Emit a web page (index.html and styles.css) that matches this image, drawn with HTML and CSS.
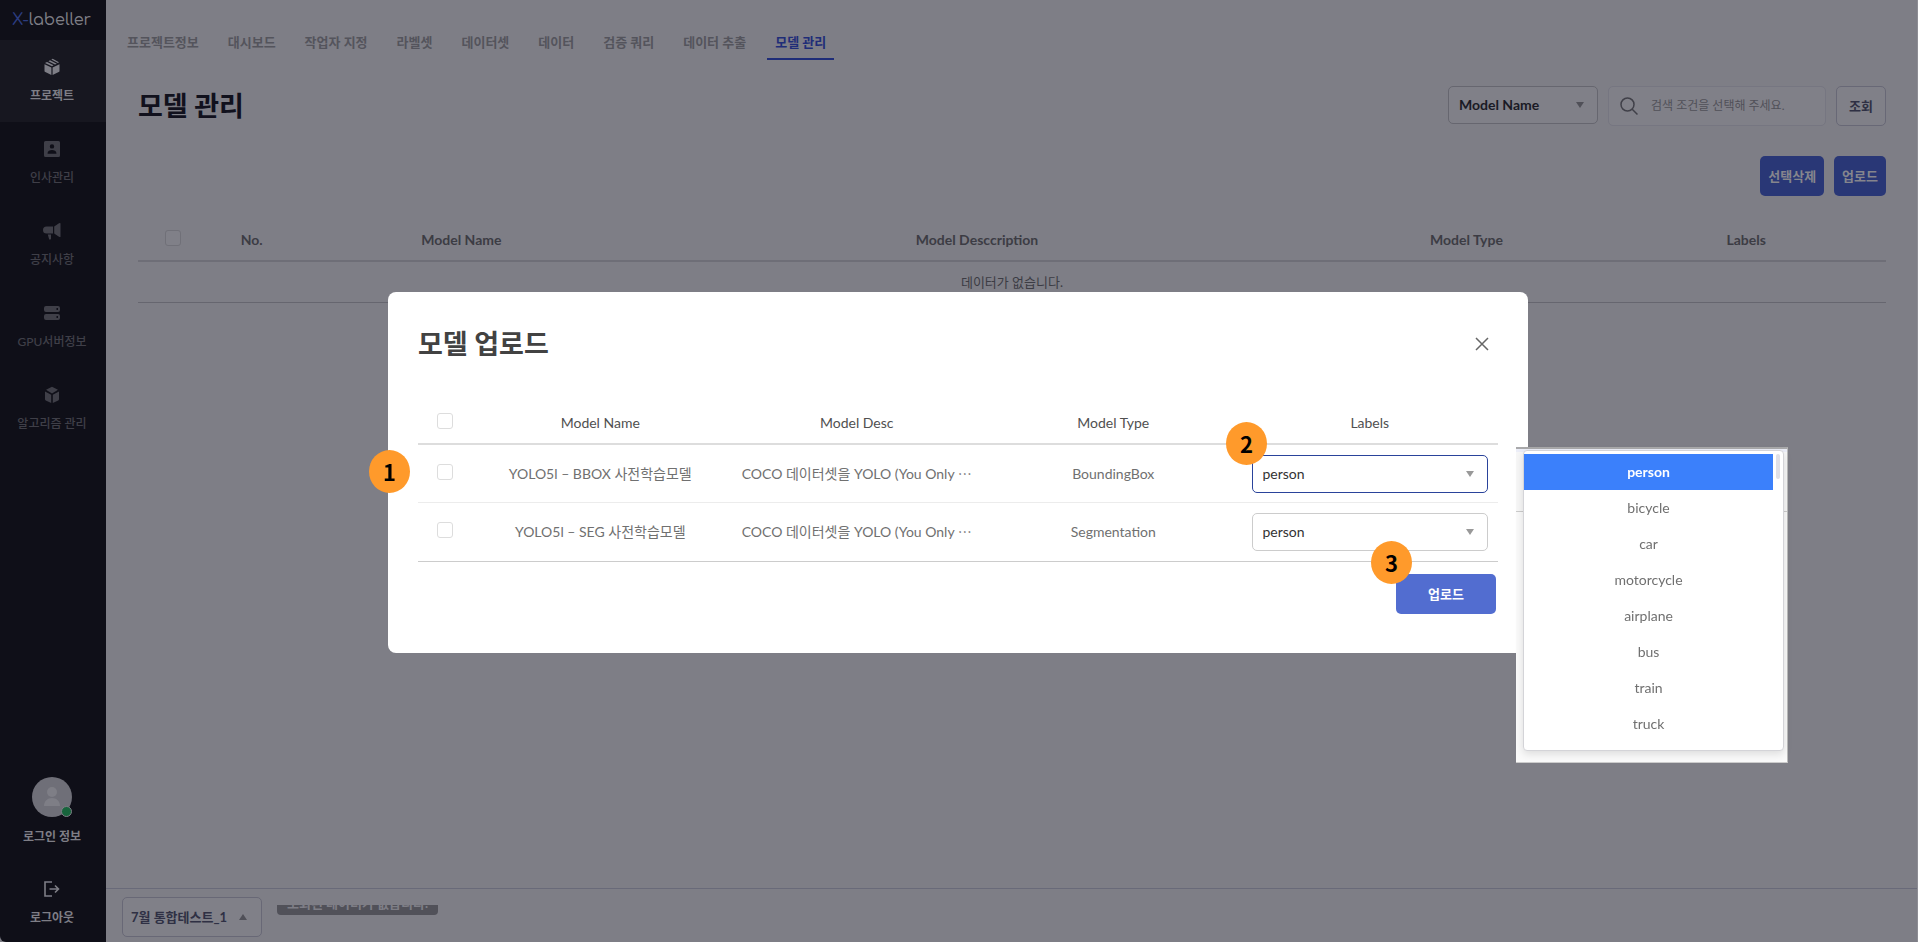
FILE: index.html
```html
<!DOCTYPE html>
<html lang="ko">
<head>
<meta charset="utf-8">
<meta name="viewport" content="width=device-width, initial-scale=1">
<title>X-labeller</title>
<link rel="stylesheet" href="styles.css">
</head>
<body>
<div class="app">
  <aside class="sidebar">
    <div class="logo"><span class="logo-mark">X-</span>labeller</div>
    <nav class="side-nav">
      <a class="side-item is-active" href="#">
        <svg width="18" height="18" viewBox="0 0 18 18" fill="currentColor"><path d="M1.5 6.2 8.4 9.6V17L2.3 14.1a1.4 1.4 0 0 1-.8-1.2zM16.5 6.2 9.6 9.6V17l6.1-2.9a1.4 1.4 0 0 0 .8-1.2zM2 4.9l2-1L10.600 7.300 9 8.300zM5.400 3.200 7 2.300 13.800 5.700 12 6.600zM8.300 1.600 9.700.8 16 4.200 14.900 5.100z"/></svg>
        <span>프로젝트</span>
      </a>
      <a class="side-item" href="#">
        <svg width="18" height="18" viewBox="0 0 18 18" fill="currentColor"><path fill-rule="evenodd" d="M2.500 1h13A1.500 1.500 0 0 1 17 2.500v13a1.500 1.500 0 0 1-1.500 1.500h-13A1.500 1.500 0 0 1 1 15.500v-13A1.500 1.500 0 0 1 2.500 1zM9 4.200a2.200 2.200 0 1 0 0 4.400 2.200 2.200 0 0 0 0-4.400zM4.600 13.800h8.800v-.8c0-1.900-2.200-3-4.400-3s-4.400 1.100-4.400 3z"/></svg>
        <span>인사관리</span>
      </a>
      <a class="side-item" href="#">
        <svg width="18" height="18" viewBox="0 0 18 18" fill="currentColor"><path d="M3.500 4.500H10v7H3.500a3.500 3.500 0 0 1 0-7zM11.200 4.400 16 1.200q1.500-.6 1.500.4v12.800q0 1-1.500.4l-4.800-3.200zM4.800 12.600H8v4.200q0 .8-.8.8H6.200z"/></svg>
        <span>공지사항</span>
      </a>
      <a class="side-item" href="#">
        <svg width="18" height="18" viewBox="0 0 18 18" fill="currentColor"><path fill-rule="evenodd" d="M3 2h12a2 2 0 0 1 2 2v2a2 2 0 0 1-2 2H3a2 2 0 0 1-2-2V4a2 2 0 0 1 2-2zm10.500 2v2h1.500V4zM3 10h12a2 2 0 0 1 2 2v2a2 2 0 0 1-2 2H3a2 2 0 0 1-2-2v-2a2 2 0 0 1 2-2zm10.500 2v2h1.500v-2z"/></svg>
        <span>GPU서버정보</span>
      </a>
      <a class="side-item" href="#">
        <svg width="18" height="18" viewBox="0 0 18 18" fill="currentColor"><path d="M9 .8 15 3.800 9 7.600 3 3.800zM2 5.400l6.200 3.400v8.200L2.800 14.500a1.400 1.400 0 0 1-.8-1.200zM16 5.400 9.800 8.800v8.200l5.400-2.500a1.400 1.400 0 0 0 .8-1.200z"/></svg>
        <span>알고리즘 관리</span>
      </a>
    </nav>
    <div class="side-foot">
      <a class="side-user" href="#">
        <span class="avatar">
          <svg width="40" height="40" viewBox="0 0 40 40" fill="#7e7e86"><circle cx="20" cy="15" r="5"/><path d="M12 29c0-5 3.500-8 8-8s8 3 8 8z"/></svg>
          <span class="status"></span>
        </span>
        <span>로그인 정보</span>
      </a>
      <a class="side-item side-logout" href="#">
        <svg width="18" height="18" viewBox="0 0 18 18" fill="none" stroke="currentColor" stroke-width="1.600"><path d="M9 2H2v14h7M6.500 9h9M12 5.500 15.500 9 12 12.500"/></svg>
        <span>로그아웃</span>
      </a>
    </div>
  </aside>

  <div class="content">
    <nav class="tabs">
      <a href="#">프로젝트정보</a>
      <a href="#">대시보드</a>
      <a href="#">작업자 지정</a>
      <a href="#">라벨셋</a>
      <a href="#">데이터셋</a>
      <a href="#">데이터</a>
      <a href="#">검증 쿼리</a>
      <a href="#">데이터 추출</a>
      <a class="is-active" href="#">모델 관리</a>
    </nav>

    <main class="page">
      <header class="page-head">
        <h1>모델 관리</h1>
        <form class="search">
          <span class="select select-dim">
            <select aria-label="검색 조건"><option>Model Name</option></select>
          </span>
          <label class="search-box">
            <svg width="20" height="20" viewBox="0 0 20 20" fill="none" stroke="#404049" stroke-width="1.500"><circle cx="8.500" cy="8.500" r="6.500"/><path d="m13.200 13.200 5.300 5.300"/></svg>
            <input type="text" placeholder="검색 조건을 선택해 주세요." aria-label="검색어">
          </label>
          <button type="button" class="btn-outline">조회</button>
        </form>
      </header>
      <div class="actions">
        <button type="button" class="btn-dim">선택삭제</button>
        <button type="button" class="btn-dim">업로드</button>
      </div>
      <table class="models">
        <colgroup><col class="w4"><col class="w5"><col class="w19"><col class="w40"><col class="w16"><col class="w16"></colgroup>
        <thead>
          <tr>
            <th><input type="checkbox" class="check check-dim" aria-label="전체 선택"></th>
            <th>No.</th><th>Model Name</th><th>Model Desccription</th><th>Model Type</th><th>Labels</th>
          </tr>
        </thead>
        <tbody><tr><td colspan="6">데이터가 없습니다.</td></tr></tbody>
      </table>
    </main>

    <footer class="footer">
      <button type="button" class="project-btn"><span>7월 통합테스트_1</span><span class="caret-up"></span></button>
      <div class="toast-clip"><div class="toast">조회된 데이터가 없습니다.</div></div>
    </footer>
  </div>
</div>

<div class="overlay">
  <section class="modal" role="dialog" aria-labelledby="modal-title">
    <header class="modal-head">
      <h2 id="modal-title">모델 업로드</h2>
      <button type="button" class="close" aria-label="닫기">
        <svg width="14" height="14" viewBox="0 0 14 14" fill="none" stroke="#666" stroke-width="1.500"><path d="m1 1 12 12M13 1 1 13"/></svg>
      </button>
    </header>
    <table class="uploads">
      <colgroup><col class="w5"><col><col><col><col></colgroup>
      <thead>
        <tr>
          <th><input type="checkbox" class="check" aria-label="전체 선택"></th>
          <th>Model Name</th><th>Model Desc</th><th>Model Type</th><th>Labels</th>
        </tr>
      </thead>
      <tbody>
        <tr>
          <td><input type="checkbox" class="check" aria-label="YOLO5l – BBOX"></td>
          <td>YOLO5l – BBOX 사전학습모델</td>
          <td>COCO 데이터셋을 YOLO (You Only ⋯</td>
          <td>BoundingBox</td>
          <td><span class="select is-focus"><select aria-label="BBOX 라벨"><option>person</option></select></span></td>
        </tr>
        <tr>
          <td><input type="checkbox" class="check" aria-label="YOLO5l – SEG"></td>
          <td>YOLO5l – SEG 사전학습모델</td>
          <td>COCO 데이터셋을 YOLO (You Only ⋯</td>
          <td>Segmentation</td>
          <td><span class="select"><select aria-label="SEG 라벨"><option>person</option></select></span></td>
        </tr>
      </tbody>
    </table>
    <div class="modal-foot"><button type="button" class="btn-primary">업로드</button></div>

    <span class="badge badge-1">1</span>
    <span class="badge badge-2">2</span>
    <span class="badge badge-3">3</span>

    <div class="popup">
      <ul class="options" role="listbox" aria-label="Labels">
        <li class="is-selected" role="option" aria-selected="true">person</li>
        <li role="option">bicycle</li>
        <li role="option">car</li>
        <li role="option">motorcycle</li>
        <li role="option">airplane</li>
        <li role="option">bus</li>
        <li role="option">train</li>
        <li role="option">truck</li>
      </ul>
    </div>
  </section>
</div>
</body>
</html>
```
FILE: styles.css
```css
* { box-sizing: border-box; }

body {
  margin: 0;
  background: #7e7e86;
  color: #3c3c44;
  font-family: Lato, "Noto Sans CJK KR", sans-serif;
  font-size: 14px;
  line-height: 20px;
}

a { color: inherit; text-decoration: none; }
h1, h2, ul { margin: 0; padding: 0; }
button, input, select { font: inherit; color: inherit; margin: 0; }
button { padding: 0; }
table { width: 100%; border-collapse: collapse; table-layout: fixed; }
th, td { padding: 0; text-align: center; white-space: nowrap; }

.w4 { width: 4%; }
.w5 { width: 5%; }
.w16 { width: 16%; }
.w19 { width: 19%; }
.w40 { width: 40%; }

.app { display: flex; min-height: 100vh; }

/* Sidebar */
.sidebar {
  width: 106px;
  flex: none;
  display: flex;
  flex-direction: column;
  background: #0f0f18;
  color: #7e7e86;
  font-size: 12px;
  font-weight: 700;
  border-bottom-left-radius: 6px;
}
.logo {
  height: 40px;
  padding-left: 12px;
  line-height: 40px;
  font-family: Comfortaa, Lato, sans-serif;
  font-size: 16px;
  font-weight: 500;
}
.logo-mark { color: #2c3d80; }
.side-item {
  height: 82px;
  padding: 18px 2px 0 0;
  display: flex;
  flex-direction: column;
  align-items: center;
  gap: 10px;
  color: #3f3f48;
  font-weight: 500;
}
.side-item.is-active { background: #171720; color: #7e7e86; font-weight: 700; }
.side-foot { margin-top: auto; }
.side-user {
  padding: 0 2px 15px 0;
  display: flex;
  flex-direction: column;
  align-items: center;
  gap: 10px;
}
.avatar { position: relative; height: 40px; border-radius: 50%; background: #6f6f78; }
.status {
  position: absolute;
  right: 0;
  bottom: 0;
  width: 11px;
  height: 11px;
  border: 1px solid #7e7e86;
  border-radius: 50%;
  background: #17643c;
}
.side-logout { height: 80px; color: #7e7e86; font-weight: 700; }

/* Content */
.content { flex: 1; min-width: 0; display: flex; flex-direction: column; border-right: 1px solid #8d8d94; }
.tabs { display: flex; gap: 13px; padding: 24px 13px 0; font-size: 13px; font-weight: 700; color: #54545c; }
.tabs a { padding: 8px 8px 6px; border-bottom: 2px solid transparent; }
.tabs .is-active { color: #1f2d78; border-color: #1f2d78; }

.page { flex: 1; padding: 26px 31px 0 32px; }
.page-head { display: flex; justify-content: space-between; align-items: flex-start; }
.page-head h1 { font-size: 27px; line-height: 40px; color: #11111d; }
.search { display: flex; gap: 10px; }

.select { position: relative; display: block; height: 38px; }
.select::after {
  content: "";
  position: absolute;
  right: 14px;
  top: 16px;
  border: 4px solid transparent;
  border-top: 6px solid #999;
  border-bottom: 0;
}
.select select {
  appearance: none;
  display: block;
  width: 100%;
  height: 100%;
  padding: 0 10px;
  border: 1px solid #ccc;
  border-radius: 5px;
  background: transparent;
  color: #333;
  outline: 0;
}
.is-focus select { border-color: #2a439b; }
.select-dim { width: 150px; }
.select-dim::after { border-top-color: #505058; }
.select-dim select { border-color: #66666f; background: #808088; color: #1a1a25; font-weight: 700; }

.search-box {
  width: 218px;
  height: 40px;
  padding: 0 10px;
  display: flex;
  align-items: center;
  gap: 12px;
  border: 1px solid #767681;
  border-radius: 5px;
  background: #808088;
}
.search-box svg { flex: none; }
.search-box input { min-width: 0; width: 100%; padding: 0; border: 0; background: none; font-size: 12px; outline: 0; }
.search-box input::placeholder { color: #505058; opacity: 1; }
.btn-outline {
  width: 50px;
  height: 40px;
  border: 1px solid #686876;
  border-radius: 5px;
  background: #808088;
  color: #2f3044;
  font-size: 13px;
  font-weight: 700;
}
.actions { display: flex; justify-content: flex-end; gap: 10px; margin-top: 30px; }
.btn-dim {
  height: 40px;
  padding: 0 8px;
  border: 0;
  border-radius: 5px;
  background: #293776;
  color: #85858d;
  font-size: 13px;
  font-weight: 700;
}

.check {
  appearance: none;
  display: block;
  width: 16px;
  height: 16px;
  margin: 0 auto 4px;
  border: 1px solid #ddd;
  border-radius: 3px;
  background: #fff;
}
.check-dim { border-color: #707078; background: #808088; }

.models { margin-top: 24px; }
.models th { height: 41px; border-bottom: 2px solid #6e6e77; font-weight: 700; }
.models td { height: 41px; border-bottom: 1px solid #66666f; font-size: 13px; }

/* Footer */
.footer { display: flex; height: 54px; padding: 8px 16px; gap: 15px; border-top: 1px solid #696a79; }
.project-btn {
  width: 140px;
  height: 40px;
  flex: none;
  padding: 0 14px 0 8px;
  display: flex;
  justify-content: space-between;
  align-items: center;
  border: 1px solid #686876;
  border-radius: 5px;
  background: #808088;
  color: #2f3044;
  font-size: 13px;
  font-weight: 700;
}
.caret-up { border: 4px solid transparent; border-bottom: 6px solid #505058; border-top: 0; }
.toast-clip { height: 10px; margin-top: 8px; display: flex; align-items: flex-end; overflow: hidden; }
.toast {
  padding: 4px 10px;
  border-radius: 4px;
  background: #515159;
  color: #7e7e86;
  font-size: 13px;
  font-weight: 700;
  line-height: 16px;
}

/* Upload dialog */
.overlay {
  position: fixed;
  inset: 0;
  display: flex;
  align-items: center;
  justify-content: center;
  padding: 3px 2px 0 0;
}
.modal { position: relative; width: 1140px; padding: 30px 30px 39px; border-radius: 8px; background: #fff; }
.modal-head { display: flex; justify-content: space-between; align-items: center; height: 44px; }
.modal-head h2 { font-size: 27px; line-height: 44px; color: #424242; }
.close { width: 32px; height: 32px; display: grid; place-items: center; border: 0; background: none; }
.uploads { margin-top: 37px; color: #707070; }
.uploads th { height: 41px; border-bottom: 2px solid #ddd; color: #505050; font-weight: 400; }
.uploads td { height: 59px; padding: 0 10px; border-bottom: 1px solid #ececec; }
.uploads th:first-child, .uploads td:first-child { padding: 0; }
.uploads tr:last-child td { border-bottom-color: #ccc; }
.modal-foot { display: flex; justify-content: flex-end; padding: 12px 2px 0 0; }
.btn-primary {
  width: 100px;
  height: 40px;
  border: 0;
  border-radius: 5px;
  background: #526dd0;
  color: #fff;
  font-size: 13px;
  font-weight: 700;
}

/* Step markers over the dialog */
.badge {
  position: absolute;
  width: 41px;
  height: 43px;
  border-radius: 50%;
  background: #ff9a2b;
  color: #000;
  font: 700 22px/43px "Noto Sans CJK KR", sans-serif;
  text-align: center;
}
.badge-1 { left: -19px; top: 158px; }
.badge-2 { left: 838px; top: 130px; }
.badge-3 { left: 983px; top: 249px; }

/* Open label list */
.popup {
  position: absolute;
  left: 1128px;
  top: 155px;
  width: 272px;
  padding: 1px 3px 11px 7px;
  border-top: 2px solid #a9a9ab;
  border-right: 1px solid #bbb;
  border-bottom: 1px solid #ccc;
  background: linear-gradient(#eceef8 3px, #f7f7f7 3px 62px, #ccc 62px 63px, #fafafa 63px);
}
.options {
  position: relative;
  padding: 3px 10px 8px 0;
  border: 1px solid #d4d4d8;
  border-radius: 4px;
  background: #fff;
  box-shadow: 0 3px 8px rgba(0, 0, 0, .12);
  color: #707070;
  list-style: none;
}
.options::after {
  content: "";
  position: absolute;
  right: 3px;
  top: 3px;
  width: 4px;
  height: 25px;
  border-radius: 2px;
  background: #e0e0e6;
}
.options li { height: 36px; line-height: 36px; text-align: center; }
.options .is-selected { background: #3b80fb; color: #fff; font-weight: 700; }
```
